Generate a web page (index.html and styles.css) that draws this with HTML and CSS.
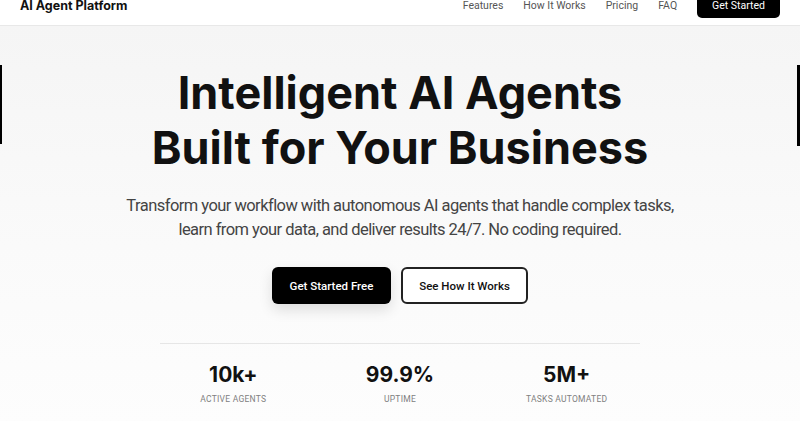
FILE: index.html
```html
<!DOCTYPE html>
<html lang="en">
<head>
<meta charset="utf-8">
<title>AI Agent Platform</title>
<link rel="stylesheet" href="styles.css">
</head>
<body>
<header class="site-header">
  <div class="logo">AI Agent Platform</div>
  <nav class="nav">
    <a href="#" class="nav-link">Features</a>
    <a href="#" class="nav-link">How It Works</a>
    <a href="#" class="nav-link">Pricing</a>
    <a href="#" class="nav-link">FAQ</a>
    <a href="#" class="nav-cta">Get Started</a>
  </nav>
</header>
<main class="hero">
  <span class="edge edge-left"></span>
  <span class="edge edge-right"></span>
  <h1 class="hero-title">Intelligent AI Agents<br>Built for Your Business</h1>
  <p class="hero-sub">Transform your workflow with autonomous AI agents that handle complex tasks, learn from your data, and deliver results 24/7. No coding required.</p>
  <div class="actions">
    <a href="#" class="btn btn-primary">Get Started Free</a>
    <a href="#" class="btn btn-outline">See How It Works</a>
  </div>
  <div class="stats">
    <div class="stat"><div class="stat-num">10k+</div><div class="stat-label">Active Agents</div></div>
    <div class="stat"><div class="stat-num">99.9%</div><div class="stat-label">Uptime</div></div>
    <div class="stat"><div class="stat-num">5M+</div><div class="stat-label">Tasks Automated</div></div>
  </div>
</main>
</body>
</html>
```
FILE: styles.css
```css
* { box-sizing: border-box; }
html, body { margin: 0; padding: 0; }
body {
  font-family: Roboto, "Noto Sans", sans-serif;
  color: #111;
  background: #fafafa;
  overflow: hidden;
}
a { text-decoration: none; color: inherit; }

.site-header {
  margin-top: -15px;
  height: 41px;
  display: flex;
  align-items: center;
  justify-content: space-between;
  padding: 0 20px;
  background: #fff;
  border-bottom: 1px solid #e8e8e8;
}
.logo {
  font-family: Inter, sans-serif;
  font-size: 12.5px;
  font-weight: 700;
  color: #111;
}
.nav {
  display: flex;
  align-items: center;
  gap: 20px;
}
.nav-link {
  font-size: 10.5px;
  color: #555;
}
.nav-cta {
  font-size: 10.5px;
  line-height: 13px;
  color: #fff;
  background: #000;
  border-radius: 5px;
  padding: 6px 15px;
}

.hero {
  position: relative;
  height: 400px;
  background: linear-gradient(180deg, #f5f5f5 0%, #fafafa 55%, #fdfdfd 100%);
  display: flex;
  flex-direction: column;
  align-items: center;
  padding-top: 39px;
  text-align: center;
}
.edge {
  position: absolute;
  top: 39px;
  width: 3px;
  height: 79px;
  background: #000;
}
.edge-left { left: 0; width: 2px; }
.edge-right { right: 0; height: 81px; }

.hero-title {
  margin: 0;
  font-family: Inter, sans-serif;
  font-size: 45px;
  line-height: 55px;
  font-weight: 700;
  letter-spacing: 0;
  color: #111;
}
.hero-sub {
  margin: 19px 0 0;
  max-width: 560px;
  font-size: 16.5px;
  line-height: 24px;
  letter-spacing: -0.55px;
  color: #444;
}
.actions {
  margin-top: 25px;
  display: flex;
  gap: 10px;
}
.btn {
  height: 37px;
  display: inline-flex;
  align-items: center;
  justify-content: center;
  border-radius: 6px;
  font-size: 11.5px;
  font-weight: 500;
}
.btn-primary {
  width: 119px;
  background: #000;
  color: #fff;
  box-shadow: 0 6px 14px rgba(0, 0, 0, 0.12);
}
.btn-outline {
  width: 127px;
  background: #fff;
  color: #111;
  border: 2px solid #222;
}

.stats {
  margin-top: 39px;
  width: 480px;
  border-top: 1px solid #e6e6e6;
  display: grid;
  grid-template-columns: repeat(3, 1fr);
  column-gap: 20px;
  padding-top: 18px;
}
.stat-num {
  font-family: Inter, sans-serif;
  font-size: 21px;
  font-weight: 700;
  line-height: 25px;
  color: #111;
}
.stat-label {
  margin-top: 7px;
  font-size: 8.5px;
  line-height: 11px;
  letter-spacing: 0.03em;
  text-transform: uppercase;
  color: #808080;
}
```
